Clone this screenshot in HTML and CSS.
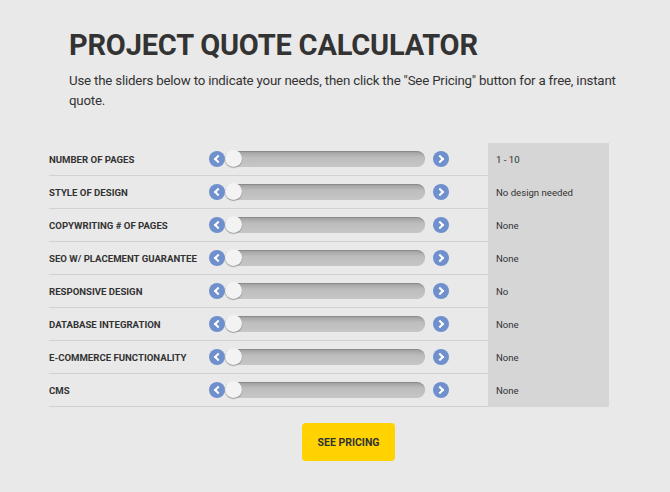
FILE: index.html
```html
<!DOCTYPE html>
<html lang="en">

<head>
    <meta charset="UTF-8">
    <meta name="viewport" content="width=device-width, initial-scale=1.0">
    <title>Project Quote Calculator</title>
    <link rel="stylesheet" href="styles.css">
</head>

<body>
    <div class="wrap">
        <div class="intro">
            <h1>Project Quote Calculator</h1>
            <p>Use the sliders below to indicate your needs, then click the "See Pricing" button for a free, instant quote.</p>
        </div>

        <div class="calc">
            <div class="row">
                <div class="label">Number of pages</div>
                <div class="slider"><span class="arrow left"></span><span class="track"><span class="knob"></span></span><span class="arrow right"></span></div>
                <div class="value">1 - 10</div>
            </div>
            <div class="row">
                <div class="label">Style of design</div>
                <div class="slider"><span class="arrow left"></span><span class="track"><span class="knob"></span></span><span class="arrow right"></span></div>
                <div class="value">No design needed</div>
            </div>
            <div class="row">
                <div class="label">Copywriting # of pages</div>
                <div class="slider"><span class="arrow left"></span><span class="track"><span class="knob"></span></span><span class="arrow right"></span></div>
                <div class="value">None</div>
            </div>
            <div class="row">
                <div class="label">SEO w/ placement guarantee</div>
                <div class="slider"><span class="arrow left"></span><span class="track"><span class="knob"></span></span><span class="arrow right"></span></div>
                <div class="value">None</div>
            </div>
            <div class="row">
                <div class="label">Responsive design</div>
                <div class="slider"><span class="arrow left"></span><span class="track"><span class="knob"></span></span><span class="arrow right"></span></div>
                <div class="value">No</div>
            </div>
            <div class="row">
                <div class="label">Database integration</div>
                <div class="slider"><span class="arrow left"></span><span class="track"><span class="knob"></span></span><span class="arrow right"></span></div>
                <div class="value">None</div>
            </div>
            <div class="row">
                <div class="label">E-commerce functionality</div>
                <div class="slider"><span class="arrow left"></span><span class="track"><span class="knob"></span></span><span class="arrow right"></span></div>
                <div class="value">None</div>
            </div>
            <div class="row">
                <div class="label">CMS</div>
                <div class="slider"><span class="arrow left"></span><span class="track"><span class="knob"></span></span><span class="arrow right"></span></div>
                <div class="value">None</div>
            </div>
        </div>

        <div class="actions">
            <button type="button">See Pricing</button>
        </div>
    </div>
</body>

</html>
```

FILE: styles.css
```css
body {
    font-family: Roboto, "Liberation Sans", sans-serif;
    margin: 0;
    background-color: #e9e9e9;
    color: #333;
}

.wrap {
    width: 560px;
    margin-left: 49px;
}

.intro {
    padding: 27px 20px 32px;
}

h1 {
    margin: 0;
    font-size: 29px;
    letter-spacing: -0.2px;
    font-weight: 700;
    text-transform: uppercase;
    line-height: 36px;
}

p {
    margin: 8px -40px 0 0;
    font-size: 13.3px;
    letter-spacing: -0.2px;
    line-height: 20px;
}

.calc {
    display: flex;
    flex-direction: column;
}

.row {
    display: flex;
    height: 33px;
}

.label {
    width: 156px;
    display: flex;
    align-items: center;
    font-size: 9.6px;
    font-weight: 700;
    text-transform: uppercase;
    border-bottom: 1px solid #d2d2d2;
}

.slider {
    width: 283px;
    display: flex;
    align-items: center;
    padding-left: 4px;
    box-sizing: border-box;
    border-bottom: 1px solid #d2d2d2;
}

.arrow {
    width: 16px;
    height: 16px;
    border-radius: 50%;
    background-color: #6f90cc;
    position: relative;
    flex: none;
}

.arrow::after {
    content: "";
    position: absolute;
    top: 5px;
    width: 4px;
    height: 4px;
    border-left: 2px solid #fff;
    border-bottom: 2px solid #fff;
}

.arrow.left::after {
    left: 6px;
    transform: rotate(45deg);
}

.arrow.right::after {
    left: 4px;
    transform: rotate(-135deg);
}

.track {
    width: 200px;
    height: 16px;
    border-radius: 8px;
    background: linear-gradient(#9e9e9e, #bdbdbd 40%, #c6c6c6);
    box-shadow: inset 0 1px 1px rgba(0, 0, 0, 0.15);
    position: relative;
    margin-right: 8px;
    flex: none;
}

.knob {
    position: absolute;
    left: 0;
    top: -1px;
    width: 17px;
    height: 17px;
    border-radius: 50%;
    background-color: #f3f3f3;
    box-shadow: 0 1px 1px rgba(0, 0, 0, 0.3);
}

.value {
    flex: 1;
    background-color: #d6d6d6;
    display: flex;
    align-items: center;
    padding-left: 8px;
    font-size: 9.6px;
}

.actions {
    padding-top: 16px;
    padding-left: 253px;
}

button {
    width: 93px;
    height: 38px;
    background-color: #ffd200;
    color: #333;
    border: none;
    border-radius: 4px;
    font-family: Roboto, "Liberation Sans", sans-serif;
    font-size: 10.5px;
    font-weight: 700;
    text-transform: uppercase;
    cursor: pointer;
}
```
